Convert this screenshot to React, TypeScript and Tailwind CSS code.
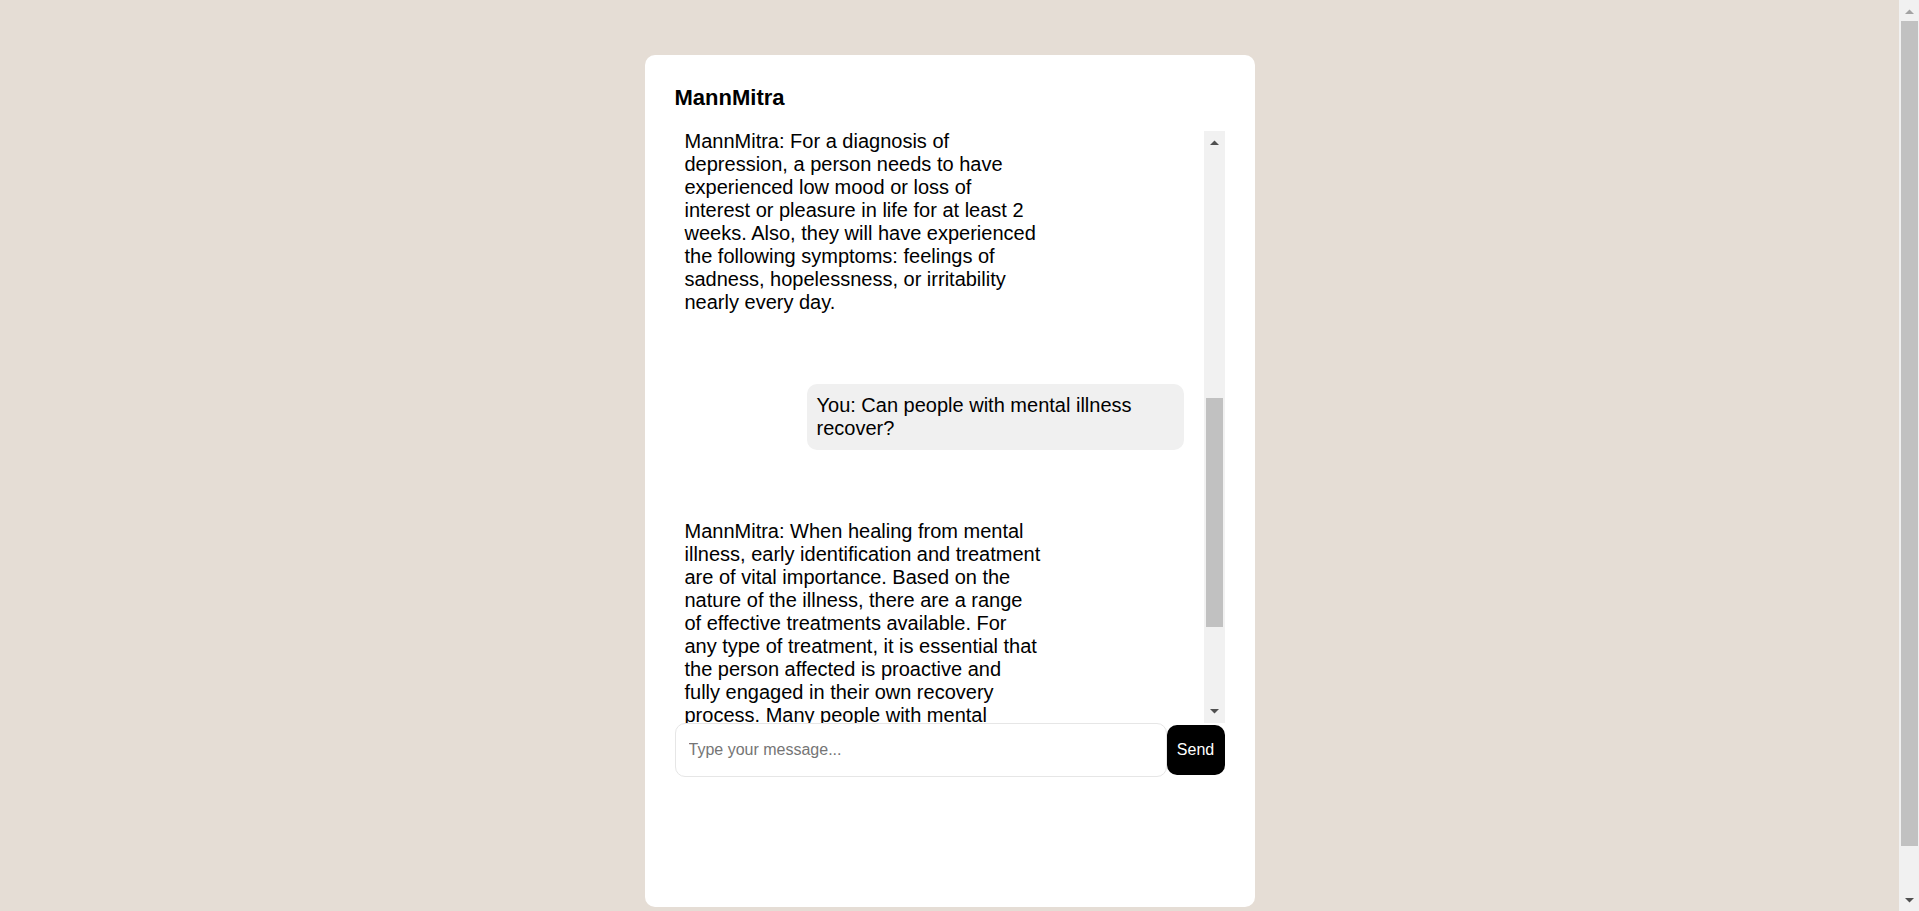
import { useCallback, useLayoutEffect, useRef, useState } from 'react';
import type { RefObject } from 'react';

type Message = { from: 'bot' | 'user'; text: string };

const messages: Message[] = [
  { from: 'user', text: 'You: Hi' },
  { from: 'bot', text: "MannMitra: Hello! I'm MannMitra, your mental health companion. How can I help you today?" },
  { from: 'user', text: 'You: What is depression?' },
  { from: 'bot', text: 'MannMitra: Depression is a mood disorder that causes a persistent feeling of sadness and loss of interest.' },
  { from: 'user', text: "You: How do I know if I'm depressed?" },
  {
    from: 'bot',
    text: 'MannMitra: For a diagnosis of depression, a person needs to have experienced low mood or loss of interest or pleasure in life for at least 2 weeks. Also, they will have experienced the following symptoms: feelings of sadness, hopelessness, or irritability nearly every day.',
  },
  { from: 'user', text: 'You: Can people with mental illness recover?' },
  {
    from: 'bot',
    text: 'MannMitra: When healing from mental illness, early identification and treatment are of vital importance. Based on the nature of the illness, there are a range of effective treatments available. For any type of treatment, it is essential that the person affected is proactive and fully engaged in their own recovery process. Many people with mental illnesses who are diagnosed and treated respond well, although some might experience a return of symptoms. Even in such cases, with careful monitoring and management of the disorder, it is still quite possible to live a fulfilled and productive life.',
  },
];

// index of the message that sits at the top of the visible chat window
const ANCHOR = 5;

type Thumb = { top: number; height: number };

// thumb size/offset of a classic scrollbar for a scroll element
function useThumb(ref: RefObject<HTMLDivElement | null>, button: number) {
  const [thumb, setThumb] = useState<Thumb>({ top: 0, height: 0 });
  const update = useCallback(() => {
    const el = ref.current;
    if (!el) return;
    const track = el.clientHeight - button * 2;
    setThumb({
      top: (track * el.scrollTop) / el.scrollHeight,
      height: (track * el.clientHeight) / el.scrollHeight,
    });
  }, [ref, button]);
  return [thumb, update] as const;
}

function Arrow({ dir, color }: { dir: 'up' | 'down'; color: string }) {
  return (
    <svg width="9" height="5" viewBox="0 0 9 5" className="block">
      <polygon points={dir === 'up' ? '0,5 4.5,0.5 9,5' : '0,0 4.5,4.5 9,0'} fill={color} />
    </svg>
  );
}

export default function App() {
  const pageRef = useRef<HTMLDivElement>(null);
  const boxRef = useRef<HTMLDivElement>(null);
  const anchorRef = useRef<HTMLDivElement>(null);
  const [pageThumb, updatePage] = useThumb(pageRef, 20);
  const [chatThumb, updateChat] = useThumb(boxRef, 21);

  useLayoutEffect(() => {
    if (boxRef.current && anchorRef.current) {
      boxRef.current.scrollTop = anchorRef.current.offsetTop + 11;
    }
    updateChat();
    updatePage();
  }, [updateChat, updatePage]);

  return (
    <div className="flex h-screen bg-[#e5ddd5] font-['Liberation_Sans',Arial,sans-serif] text-black">
      {/* Page */}
      <div ref={pageRef} onScroll={updatePage} className="min-w-0 flex-1 overflow-y-auto [scrollbar-width:none]">
        <div className="py-[55px]">
          <div className="mx-auto flex h-[852px] w-[610px] flex-col rounded-[10px] bg-white p-[30px]">
            {/* Header */}
            <h2 className="mb-[21px] text-[22px] font-bold leading-[25px]">MannMitra</h2>

            {/* Chat window */}
            <div className="flex h-[592px]">
              <div
                ref={boxRef}
                onScroll={updateChat}
                className="relative min-w-0 flex-1 overflow-y-auto [scrollbar-width:none]"
              >
                <div className="flex flex-col gap-[60px] pt-[20px] pb-[20px]">
                  {messages.map((m, i) =>
                    m.from === 'user' ? (
                      <div
                        key={i}
                        className="mr-[20px] max-w-[377px] self-end rounded-[10px] bg-[#f0f0f0] p-[10px] text-[20px] leading-[23px]"
                      >
                        {m.text}
                      </div>
                    ) : (
                      <div
                        key={i}
                        ref={i === ANCHOR ? anchorRef : undefined}
                        className="max-w-[377px] self-start p-[10px] text-[20px] leading-[23px]"
                      >
                        {m.text}
                      </div>
                    ),
                  )}
                </div>
              </div>

              {/* Chat scrollbar */}
              <div className="flex w-[21px] flex-col bg-[#f1f1f1]">
                <div className="flex h-[21px] shrink-0 justify-center pt-[9px]">
                  <Arrow dir="up" color="#505050" />
                </div>
                <div className="flex min-h-0 flex-1 flex-col">
                  <div
                    className="mx-[2px] shrink-0 bg-[#c1c1c1]"
                    style={{ marginTop: chatThumb.top, height: chatThumb.height }}
                  />
                </div>
                <div className="flex h-[21px] shrink-0 justify-center pt-[7px]">
                  <Arrow dir="down" color="#505050" />
                </div>
              </div>
            </div>

            {/* Input row */}
            <div className="flex items-center">
              <input
                type="text"
                placeholder="Type your message..."
                className="h-[54px] min-w-0 flex-1 rounded-[10px] border border-[#e6e6e6] px-[13px] text-[16px] outline-none placeholder:text-[#757575]"
              />
              <button className="h-[50px] w-[58px] rounded-[10px] bg-black text-[16px] text-white">Send</button>
            </div>
          </div>
        </div>
      </div>

      {/* Page scrollbar */}
      <div className="flex w-[20px] shrink-0 flex-col bg-[#f1f1f1]">
        <div className="flex h-[20px] shrink-0 justify-center pt-[9px]">
          <Arrow dir="up" color="#a3a3a3" />
        </div>
        <div className="flex min-h-0 flex-1 flex-col">
          <div
            className="ml-[2px] mr-[1px] shrink-0 bg-[#c1c1c1]"
            style={{ marginTop: pageThumb.top + 1, height: pageThumb.height }}
          />
        </div>
        <div className="flex h-[20px] shrink-0 justify-center pt-[7px]">
          <Arrow dir="down" color="#505050" />
        </div>
      </div>
    </div>
  );
}
